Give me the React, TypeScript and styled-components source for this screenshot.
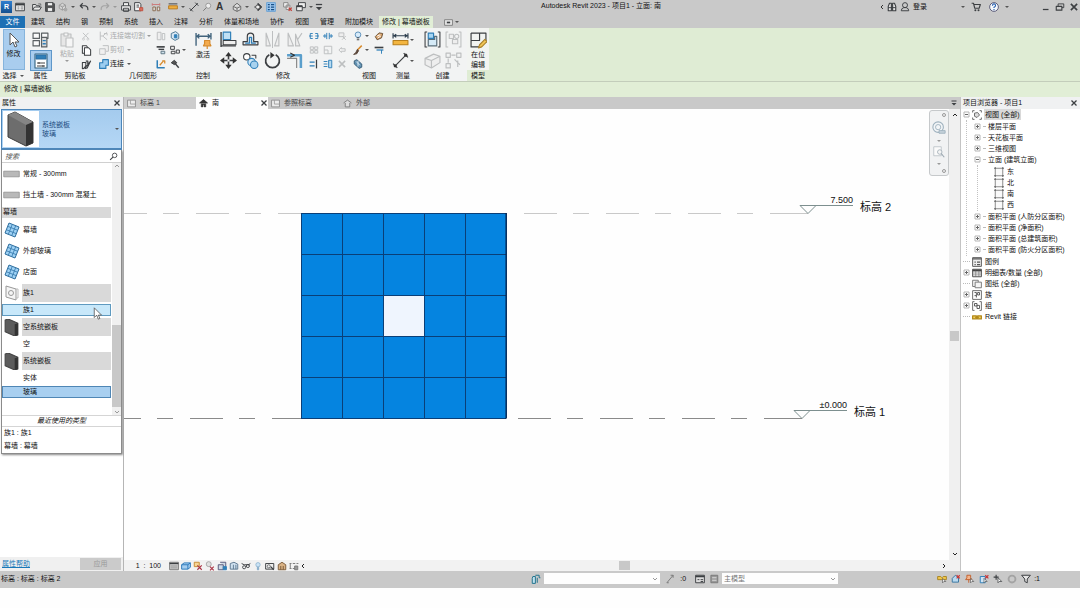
import React from "react";
import styled, { createGlobalStyle, css } from "styled-components";

const GlobalStyle = createGlobalStyle`
  *, *::before, *::after { box-sizing: border-box; }
  body { margin: 0; background: #fefefe; }
  button, input, select { font: inherit; color: inherit; margin: 0; padding: 0; border: 0; background: none; border-radius: 0; }
  ul { list-style: none; margin: 0; padding: 0; }
`;

const BLUE = "#2f7fb8";
const INK = "#3c3f42";
const PALE = "#bdbfc0";
const ORANGE = "#d68a2c";

/* ---------- icons (16 unit grid) ---------- */

type StrokeProps = { d: string; s?: string; f?: string; w?: number };
const P = ({ d, s = INK, f = "none", w = 1.5 }: StrokeProps) => (
  <path d={d} stroke={s} fill={f} strokeWidth={w} strokeLinejoin="round" />
);

const icons: Record<string, React.ReactNode> = {
  window: <><P d="M1 2h14v12H1z" f="#f4f4f4" /><P d="M1 4h14" w={3} /><P d="M4 8h3M4 11h3M9 8h4M9 11h4" w={1} /></>,
  open: <><P d="M1 13V4h5l1 2h5v2M1 13l3-5h11l-3 5z" f="#eee" /><P d="M10 3h4v3" w={1} /></>,
  save: <><P d="M1 1h12l2 2v12H1z" f="#555" /><P d="M4 1h8v5H4zM4 9h8v6H4z" f="#f2f2f2" w={1} /></>,
  cloud: <><P d="M2 5l5-3 5 3v5l-5 3-5-3zM2 5l5 3 5-3M7 8v5" s="#999" f="#d8d8d8" /><circle cx="12" cy="12" r="3" fill="#aaa" /></>,
  undo: <P d="M6 2L2 6l4 4M2 6h8q5 1 4 7" w={1.8} />,
  redo: <P d="M10 2l4 4-4 4M14 6H6q-5 1-4 7" s="#a4a4a4" w={1.8} />,
  print: <><P d="M4 6V1h8v5M1 6h14v7H1zM4 10h8v5H4z" f="#f1f1f1" /></>,
  docRed: <><P d="M1 1h8l2 3v10H1z" f="#f5f5f5" /><P d="M4 5h4M4 8h4" /><P d="M9 9h5v5H9z" f="#d87060" s="#c05040" /></>,
  measureDim: <><P d="M2 2v4M14 2v4M2 4h12" s="#c77" /><P d="M3 8h4v6H3zM10 8h4v6h-4z" s="#8a6a50" f="#ddd" /></>,
  ruler: <><P d="M1 6h14v5H1z" f="#f0ae3c" s="#b87a20" /><P d="M1 3h14" /></>,
  dim: <><P d="M2 14L14 2M1 10l5 5M10 1l5 5" w={1.6} /></>,
  tag: <><circle cx="10" cy="6" r="4" fill="#eee" stroke="#777" /><P d="M2 14l5-5" s="#777" /></>,
  home: <><P d="M2 7l6-5 6 5v5l-6 3-6-3zM2 7l6 3 6-3M8 10v5" f="#ddd" s="#666" /></>,
  section: <><P d="M2 8h3" /><circle cx="8" cy="8" r="3.5" fill="#eee" stroke="#444" strokeWidth="1.5" /><P d="M8 2l6 6-6 6z" f="#444" /><circle cx="8" cy="8" r="2.5" fill="#eee" /></>,
  thin: <><P d="M1 1h14v14H1z" s="#6aa2d4" f="#9cc6ee" /><P d="M3 4h3M8 4h5M3 8h3M8 8h5M3 12h3M8 12h5" s="#174f86" w={2} /></>,
  closeWin: <><P d="M1 1h7v7H1zM5 5h6v7H5z" f="#eee" s="#888" /><P d="M9 9l5 5M14 9l-5 5" s="#c2413a" w={2} /></>,
  switchWin: <><P d="M4 1h11v8H4z" f="#eee" /><P d="M1 6h9v8H1z" f="#eee" /><P d="M1 7h9" w={2.5} /></>,
  custom: <><P d="M3 4h10" w={2} /><P d="M3 8h10l-5 5z" f={INK} s="none" /></>,
  binoc: <><P d="M2 14V7l2-5h3v12zM9 14V2h3l2 5v7z" f="#e5e5e5" w={1.8} /><P d="M2 9h12" /></>,
  user: <><circle cx="8" cy="5" r="4" fill="none" stroke={INK} strokeWidth="1.5" /><P d="M2 14q0-4 4-5h4q4 1 4 5z" /></>,
  cart: <><P d="M1 2h3l2 8h7l2-6H5" f="none" w={1.8} /><circle cx="7" cy="13" r="1.6" fill={INK} /><circle cx="12" cy="13" r="1.6" fill={INK} /></>,
  help: <><circle cx="8" cy="8" r="7" fill="#f5f8fc" stroke="#446" strokeWidth="1.3" /><P d="M5.500 6q0-3 2.500-3t2.500 2.500q0 1.500-2.500 3v1M8 11v2" s="#2a62b0" w={1.8} /></>,
  min: <P d="M3 12h9" w={2} />,
  restore: <><P d="M5 3h9v6H5z" /><P d="M2 7h9v6H2z" f="#c9c9c9" w={1.8} /></>,
  close: <P d="M3 3l10 10M13 3L3 13" w={2.6} />,
  playBox: <><P d="M1 3h14v10H1z" f="#e8e8e8" s="#777" /><P d="M5 8h6" w={3} /></>,
  cursor: <P d="M4 1v12l3-3 2 5 2-1-2-4h4z" f="#fff" s="#555" w={1} />,
  types: <><P d="M1 2h6v5H1zM9 2h6v5H9zM1 9h6v5H1z" f="#fafafa" s="#5b6063" w={1.1} /><P d="M9 6h5v9H9z" f="#dcdcdc" s="#5b6063" w={1.1} /><P d="M10 9h3M10 12h3" s={BLUE} w={1.2} /></>,
  props: <><P d="M2 1h12v14H2z" f="#fff" s="#33627f" w={1.1} /><P d="M3 2h10v4H3z" f={BLUE} s="#2b6fa3" w={1} /><P d="M4 10h8M4 13h8M6 9v2M10 12v2" s="#444" w={1} /></>,
  paste: <><P d="M2 2h10v12H2z" f="#e7e7e7" s={PALE} w={1.1} /><P d="M5 1h4v3H5zM7 6h7v9H7z" f="#f6f6f6" s={PALE} w={1.1} /></>,
  cutGray: <><P d="M3 3l9 9M12 3l-9 9" s={PALE} /><circle cx="4" cy="13" r="1.6" fill="none" stroke={PALE} /><circle cx="11" cy="13" r="1.6" fill="none" stroke={PALE} /></>,
  copyDoc: <><P d="M2 1h6l2 3v8H2z" f="#fff" /><P d="M5 4h6l3 3v8H5z" f="#fff" /></>,
  matchBrush: <><P d="M2 5h5v5q-3 5-5 4z" f="#eee" /><P d="M7 3h3v8M14 3l-5 10-3 1 1-3z" f="#9a9a9a" /></>,
  copeGray: <><P d="M2 1v14M2 8h4l7-6M6 8l7 6M8 4h5v3" s={PALE} /></>,
  cutGeoGray: <P d="M6 1h9v9h-4M1 6h9v9H1z" f="#f0f0f0" s={PALE} />,
  join: <><P d="M6 1h9v9h-4v5H1V6h5z" f="#9ccdf0" s={BLUE} w={1.8} /></>,
  splitWall: <><P d="M2 2h6v12H2z" f="#eee" s={PALE} /><P d="M10 4h4v10h-4z" s={PALE} /></>,
  cubeBlue: <><P d="M2 4l7-3 5 4v7l-6 3-6-4z" f="#dce9f3" s="#4b7691" /><P d="M7 6h4v5H7z" f={BLUE} s={BLUE} /></>,
  beam: <><P d="M1 3h13" w={2.6} /><P d="M4 7h9" w={2.2} /><P d="M8 10h6v4H8z" s="#5f7683" f="#cfe0ea" /></>,
  boxes: <><P d="M1 2h6v5H1zM2 10h6v4H2zM10 8h5v5h-5z" f="#eee" /></>,
  paint: <><P d="M2 2v12h12" s={BLUE} w={2.4} /><P d="M6 10l6-7M10 3h4v4" s={ORANGE} w={2} /></>,
  hammer: <><P d="M2 6l5-4 4 4-4 3z" f="#555" /><P d="M8 7l6 7" w={2.4} /></>,
  activate: <><P d="M1 1v12M15 1v6M1 4h14M4 2L2 4l2 2M12 2l2 2-2 2" s="#41637c" w={1.3} /><P d="M9 8h5v3l1 2H8l1-2zM11.500 13v3" f="#f4ab4e" s={ORANGE} w={1.1} /></>,
  align: <><P d="M1 1v14M1 14h14" w={1.3} /><P d="M3 1h7v7H3z" f="#bfe0f5" s={BLUE} w={1.1} /><P d="M3 9h12v4H3z" f="#eee" w={1} /></>,
  offset: <><P d="M1 13h14v-3h-4V5q0-3-3-3T5 5v5H1z" f="#eee" w={1.1} /><P d="M3 11.500h4V6h2v5.500h4" s={BLUE} w={1.2} /></>,
  mirror1: <><P d="M2 14V2l4 12zM14 14V2l-4 12z" f="#eee" s={PALE} w={1.1} /><P d="M8 0v16" s={PALE} w={1} /></>,
  mirror2: <><P d="M2 14V2l5 12zM9 14V3l4 11zM11 8l4-6" f="#eee" s={PALE} w={1.1} /></>,
  move: <><P d="M8 3v10M3 8h10" w={1.5} /><P d="M8 0l3 4H5zM8 16l3-4H5zM0 8l4-3v6zM16 8l-4-3v6z" f="#333" s="none" /><P d="M7 7h2v2H7z" f="#f4f4f4" s="none" /></>,
  copy: <><circle cx="4.500" cy="4.500" r="3" fill="#fff" stroke={INK} /><P d="M9 3h4v3" w={1} /><circle cx="9" cy="9.500" r="3.500" fill="#cfe6f6" stroke={BLUE} /><circle cx="11.500" cy="12" r="3.500" fill="#a8d2ef" stroke={BLUE} /></>,
  rotate: <><P d="M5 2.500a6.500 6.500 0 1 0 6 0" w={1.6} /><P d="M6 0v6l4-3z" f="#333" s="none" /></>,
  trim: <><P d="M1 6h9v9" s="#888" w={1.1} /><P d="M1 3h13v12" s="#5b9fcc" w={2.4} /><P d="M4 1l4 2-4 2" s="#333" w={1} /></>,
  splitEl: <><P d="M6 4H2v8h4M10 4h4v8h-4" s={BLUE} /><P d="M0 8h6M10 8h6" s={BLUE} /></>,
  splitGap: <><P d="M6 3v10M10 3v10M0 8h6M10 8h6" s={BLUE} /><P d="M3 5v6M13 5v6" s={BLUE} /></>,
  arrGray: <><P d="M2 3h5v4H2zM9 3h5v4H9zM2 9h5v4H2zM9 9h5v4H9z" s={PALE} /></>,
  scaleGray: <><P d="M2 2h12v12H2zM2 8h6v6" s={PALE} /></>,
  unpinGray: <><P d="M3 3h8v6H3z" s={PALE} f="#eee" /><P d="M8 8l6 6M14 8l-6 6" s={PALE} /></>,
  pinGray: <P d="M3 8l4-4v2h6v4H7v2z" s={PALE} />,
  trimEl: <><P d="M1 5h8M1 11h8" s={BLUE} w={2} /><P d="M12 1v14" w={2} /></>,
  trimMul: <><P d="M1 4h6M1 8h6M1 12h6M9 2v12h5V2z" s={BLUE} f="#b7dbf2" /></>,
  xGray: <P d="M3 3l10 10M13 3L3 13" s={PALE} w={2.4} />,
  bulb: <><circle cx="8" cy="6" r="4.500" fill="#d7ebfa" stroke="#4f87b5" strokeWidth="1.4" /><P d="M6 11h4M6 14h4" /></>,
  render: <><P d="M2 9l6-6 6 1-2 7-7 3z" f="#d9a36a" s="#6b5238" /><P d="M5 8l5-2M6 11l5-3" s="#fff" /></>,
  brush: <><P d="M14 1L7 8" s={ORANGE} w={2.4} /><P d="M7 7l2 2-3 5-5 1 3-2z" f="#5a463a" s="#5a463a" /></>,
  lineWork: <><P d="M1 4h14" w={2.6} /><P d="M4 8h11" s={BLUE} w={2} /><P d="M12 8v6" s={BLUE} /></>,
  cubes: <><P d="M2 3l4-2 8 7v5l-4 2-8-7z" f="#5f8fb0" s="#3a5f7a" /><P d="M5 4l6 6M8 3v9" s="#dcecf6" /></>,
  tape: <><P d="M1 9h14v4H1z" f="#f3b53f" s="#b87f1c" w={1} /><P d="M1 2v5M15 2v5M1 4.500h14M4 3L2 4.500 4 6M12 3l2 1.500L12 6" s="#2b3c4c" w={1.100} /></>,
  dimBig: <><P d="M3 13L13 3M1 11l4 4M11 1l4 4" w={1.1} /><circle cx="3" cy="13" r="1.500" fill="#333" /><circle cx="13" cy="3" r="1.500" fill="#333" /></>,
  group: <><P d="M3 1H1v14h2M13 1h2v14h-2" w={1} /><P d="M4 2h5v5H4z" f="#a7d5f2" s={BLUE} w={1.1} /><P d="M4 8v6h8V5h-2v3z" f="#d5eaf7" s="#5a6e7a" w={1.1} /></>,
  groupGray: <><P d="M3 1H1v14h2M13 1h2v14h-2" s={PALE} w={1} /><P d="M4 3h4v4H4zM7 8h5v4H7z" s={PALE} f="#eee" w={1} /><circle cx="11" cy="5" r="2" fill="none" stroke={PALE} /></>,
  assembly: <><P d="M1 6l8-4 6 2v6l-8 5-6-3zM1 6l6 2 8-4M7 8v7" f="#eee" s={PALE} w={1.1} /></>,
  similar: <><P d="M1 1h4v4H1zM11 1h4v4h-4zM6 3h4M3 6v4M1 11h4v4H1zM9 7l5 5M12 8v6" s={PALE} w={1.1} /></>,
  editPlace: <><P d="M1 1h14v9M1 1v13h8M1 8h8V1" w={1.1} /><P d="M8 15l1-3 5-5 2 2-5 5z" f="#f0c456" s="#a9802a" w={1} /></>,
  plan: <><P d="M1 2h14v12H1z" f="#ececec" s="#888" /><P d="M6 2v7M6 9h9" s="#999" /></>,
  elevHome: <><P d="M1 7l7-6 7 6z" f="#333" s="#333" /><P d="M4 8v6h3v-4h2v4h3V8" f="#333" s="#333" w={1} /></>,
  elevHomeDim: <><P d="M1 7l7-5 7 5M4 7v7h8V7" f="#ddd" s="#777" /></>,
  search: <><circle cx="10" cy="6" r="4" fill="none" stroke={INK} strokeWidth="1.5" /><P d="M7 9l-5 5" w={1.8} /></>,
  curtain: <><P d="M5 1l10 4-4 10L1 11z" f="#9fd2f5" s="#2c6c9c" w={1} /><P d="M8.300 2.300L4.300 12.300M11.700 3.700L7.700 13.700M3.700 4.300l10 4M2.300 7.700l10 4" s="#3b7eb0" w={0.9} /></>,
  family: <><P d="M2 1l10 3v11L2 12z" f="#f5f5f5" s="#999" w={1} /><circle cx="7" cy="8" r="2.500" fill="none" stroke="#999" /><P d="M12 4h2v9h-2" s="#bbb" w={1} /></>,
  panel: <><P d="M2 1l3-1 9 4v11l-3 1-9-4z" f="#5c5c5c" s="#444" w={1} /><P d="M11 5l3-1v11l-3 1z" f="#333" s="none" /></>,
  slab: <P d="M1 4h22v8H1z" f="#b9b9b9" s="#8a8a8a" w={1} />,
  detail: <><P d="M1 2h14v12H1z" f="#c9c9c9" s="#777" /><P d="M1 4h14" w={2} /><P d="M3 8h10M3 11h10" s="#999" /></>,
  style: <><P d="M1 6l4-3h10v7l-4 3H1zM1 6h10v7M11 6l4-3" f="#a5cdee" s="#2a78ba" /></>,
  sun: <><P d="M2 2h8v7H2z" f="#f6d594" s="#c58a32" /><P d="M7 7l7 7M14 7l-7 7" s="#a34" w={1.8} /></>,
  shadow: <><circle cx="6" cy="5" r="4" fill="#e0e0e0" stroke="#888" /><P d="M8 9l6 6M14 9l-6 6" s="#a34" w={1.8} /></>,
  crop: <><P d="M2 6h8v8H2zM5 2h9v9" s="#557" f="#cdd9e5" /><P d="M10 9h5v5h-5z" f={BLUE} s={BLUE} /></>,
  cropShow: <><P d="M2 4l6-2 6 3v8H2z" f="#cfe0ee" s="#5d7890" /><P d="M7 6v7M11 6v7" s="#5d7890" /></>,
  glasses: <><P d="M1 4l4 2M15 4l-3 2M5 6h8" /><circle cx="5" cy="10" r="2.500" fill="none" stroke={INK} strokeWidth="1.4" /><circle cx="11" cy="8" r="2.500" fill="none" stroke={INK} strokeWidth="1.4" /></>,
  bulbSm: <><circle cx="8" cy="6" r="3.500" fill="#cbe3f5" stroke="#7aa3c4" /><P d="M7 10h2v4H7z" s="#7aa3c4" /></>,
  camera: <><P d="M1 4h13v9H1z" f="#eee" /><circle cx="6" cy="8.500" r="2.500" fill="none" stroke={INK} /><P d="M9 9l5 5" w={2} /></>,
  analytic: <><P d="M2 14V6l6-4 6 4v8z" f="#d8b184" s="#7a5a3a" /><P d="M6 14V8M10 14V8" s="#7a5a3a" /></>,
  constraint: <><P d="M1 4h3M6 4h4M12 4h3M1 12h3M6 12h4M2 4v8" s="#777" /><P d="M9 8h5v6H9z" f="#999" s="#777" /></>,
  workset: <><P d="M3 4h4v11H2V7z" f="#bfe0ee" s="#23758f" w={1.6} /><P d="M7 2h6v4h2M10 6v8" s="#23758f" w={1.6} /></>,
  edit: <P d="M3 14L13 2M3 14h3M9 2h4v4" s="#777" />,
  optBox: <><P d="M1 2h14v12H1z" f="#ddd" /><P d="M1 4h14" w={2.5} /><P d="M4 9h3M9 9h4M9 12h4" /></>,
  optDark: <><P d="M3 2h11v12H3z" f="#999" s="#777" /><P d="M5 6h7M5 10h7" s="#ddd" /></>,
  selLink: <><P d="M1 4h5l2 2 2-2h5v5H1z" f="#f0c64a" s="#a88424" /><P d="M9 7v7l2-2h3z" f="#fff" s="#444" w={1} /></>,
  selUnder: <><P d="M2 13V7l5-5 5 4v7z" f="#b8d9f0" s="#37749e" /><P d="M9 2l5 5M14 2L9 7" s="#c33" w={1.8} /></>,
  selPin: <><P d="M3 2h6v4l2 3H1l2-3zM6 9v5" f="#f4b48c" s="#c2602c" /><P d="M9 7v7l2-2h3z" f="#fff" s="#444" w={1} /></>,
  selFace: <><P d="M2 4h8v10H2z" f="#cfe4f5" s={BLUE} /><P d="M10 2l5 5M15 2l-5 5" s="#c33" w={1.8} /><P d="M8 7v7l2-2h3z" f="#fff" s="#444" w={1} /></>,
  drag: <><P d="M5 1v8M1 5h8" w={1.800} /><P d="M8 6v8l2-2h4z" f="#fff" w={1.2} /></>,
  ring: <circle cx="8" cy="8" r="5.500" fill="none" stroke="#a3a3a3" strokeWidth="3" />,
  filter: <P d="M1 2h14l-5 6v6l-4-2V8z" f="#e5e5e5" w={1.6} />,
  views: <><P d="M4 5l5-1 3 4-4 4-4-2z" f="#ddd" s="#666" /><P d="M1 4V1h3M12 1h3v3M15 12v3h-3M4 15H1v-3" s="#666" /></>,
  elev: <><P d="M2 2h12v12H2z" f="#fafafa" s="#8b8b8b" w={1.6} /><P d="M0 2h3M13 2h3M0 14h3M13 14h3M2 0v3M14 0v3M2 13v3M14 13v3" s="#666" w={1.4} /></>,
  legend: <><P d="M1 1h14v14H1z" f="#eee" s="#555" /><P d="M1 3h14M4 8h2M8 8h5M4 12h2M8 12h5" s="#555" w={2} /></>,
  schedule: <><P d="M1 2h14v12H1z" f="#fff" s="#444" /><P d="M1 4h14" s="#444" w={3} /><P d="M1 8h14M1 11h14M6 4v10M11 4v10" s="#666" w={1} /></>,
  sheets: <P d="M1 2h9v3h5v9H5v-2H1zM5 12V5h5" f="#f5f5f5" s="#777" />,
  familyTree: <><P d="M1 1h14v14H1z" f="#fff" s="#666" /><P d="M4 4h3v8M9 4h3v4H9zM4 9h3" s="#555" /></>,
  groupTree: <><P d="M4 1H1v14h3M12 1h3v14h-3" s="#666" /><P d="M4 4h4v4H4zM8 7h4v5H8z" s="#555" /></>,
  link: <><P d="M1 6h6v5H1zM9 6h6v5H9z" f="#f3cf58" s="#b28a1e" w={2} /><P d="M5 8.500h6" s="#b28a1e" w={2} /></>,
  wheel: <><circle cx="7" cy="7" r="6" fill="#f3f5f7" stroke="#9db0bd" strokeWidth="1.200" /><circle cx="7" cy="7" r="3" fill="none" stroke="#9db0bd" /><P d="M8 11h7v3H8z" f="#c6d3db" s="#9db0bd" w={1} /></>,
  zoomBox: <><P d="M1 1h10v12H1z" f="#fafafa" s="#b3bcc2" w={1} /><circle cx="9" cy="8" r="3" fill="#f5f5f5" stroke="#9aa7b0" /><P d="M11 10l4 5" s="#9aa7b0" /></>,
};

const Svg = styled.svg`display: block; flex: none;`;
const Icon = ({ n, size = 10 }: { n: string; size?: number }) => (
  <Svg width={size} height={size} viewBox="0 0 16 16" aria-hidden="true">{icons[n]}</Svg>
);

const Arrow = styled.span<{ $wide?: boolean; $soft?: boolean }>`
  flex: none;
  width: ${p => (p.$wide ? 8 : 6)}px;
  display: flex;
  justify-content: center;
  &::after { content: ""; border: 2px solid transparent; border-top-color: ${p => (p.$soft ? "#999" : "#555")}; border-bottom: 0; }
`;

/* ---------- frame ---------- */

const Frame = styled.div`
  min-height: 100vh;
  padding-bottom: 20px;
  display: flex;
  flex-direction: column;
  font: 7px/10px "Liberation Sans", "Noto Sans CJK SC", sans-serif;
  color: #111;
  cursor: default;
`;
const TitleBar = styled.header`
  height: 14px;
  display: flex;
  align-items: center;
  background: #c9c9c9;
`;
const ToolGroup = styled.div<{ $pad?: number }>`
  display: flex;
  align-items: center;
  padding-right: ${p => p.$pad ?? 0}px;
`;
const ToolButton = styled.button<{ $gap?: boolean; $w?: number }>`
  width: ${p => p.$w ?? 13}px;
  height: 13px;
  flex: none;
  display: flex;
  align-items: center;
  justify-content: center;
  margin-left: ${p => (p.$gap ? 4 : 0)}px;
`;
const Logo = styled.span`
  width: 11px;
  height: 12px;
  margin: 0 1px;
  background: linear-gradient(#2f7fd0, #14508f);
  color: #fff;
  font-weight: bold;
  line-height: 11px;
  text-align: center;
`;
const TextTool = styled.span`font: bold 10px/12px "Liberation Sans", sans-serif; color: #333;`;
const WindowTitle = styled.h1`flex: 1; margin: 0; padding-bottom: 2px; font: inherit; text-align: center;`;

const TabBar = styled.nav`
  height: 14px;
  display: flex;
  align-items: flex-end;
  gap: 1px;
  background: #c9c9c9;
`;
const RibbonTab = styled.button<{ $kind?: "file" | "active" }>`
  height: 12px;
  padding: 0 5px;
  line-height: 12px;
  white-space: nowrap;
  ${p => p.$kind === "file" && css`background: #1d70b4; color: #fff; width: 25px;`}
  ${p => p.$kind === "active" && css`background: #e1eed6; padding: 0 3px;`}
`;
const TabMenu = styled.button`
  display: flex;
  align-items: center;
  margin-left: 10px;
  height: 12px;
`;

const Ribbon = styled.section`
  display: flex;
  height: 54px;
  background: #dfecd4;
  border-bottom: 1px solid #c3cdbb;
`;
const Panel = styled.div<{ $w: number; $green?: boolean }>`
  width: ${p => p.$w}px;
  flex: none;
  display: flex;
  flex-direction: column;
  background: ${p => (p.$green ? "linear-gradient(#f2f4f1 80%, #dfecd4 80%)" : "#f2f3f3")};
`;
const PanelBody = styled.div`
  height: 43px;
  padding-top: 1px;
  display: flex;
  justify-content: center;
`;
const PanelLabel = styled.div`
  display: flex;
  justify-content: center;
  align-items: center;
  gap: 2px;
  white-space: nowrap;
`;
const Large = styled.button<{ $active?: boolean; $off?: boolean }>`
  width: 22px;
  height: 41px;
  display: flex;
  flex-direction: column;
  align-items: center;
  gap: 1px;
  padding-top: 3px;
  color: ${p => (p.$off ? "#a9abac" : "inherit")};
  ${p => p.$active && css`background: #a9cdee; box-shadow: inset 0 0 0 1px #86b4dc;`}
`;
const Stack = styled.div`display: flex; flex-direction: column;`;
const Half = styled.button<{ $active?: boolean }>`
  width: 22px;
  height: 21px;
  display: flex;
  align-items: center;
  justify-content: center;
  ${p => p.$active && css`background: #a9cdee; box-shadow: inset 0 0 0 1px #5f97c9;`}
`;
const Small = styled.button<{ $off?: boolean }>`
  height: 14px;
  display: flex;
  align-items: center;
  gap: 1px;
  padding: 0 1px;
  white-space: nowrap;
  color: ${p => (p.$off ? "#a9abac" : "inherit")};
`;
const Cells = styled.div<{ $cols: number; $w: number; $h: number }>`
  display: grid;
  grid-template-columns: repeat(${p => p.$cols}, ${p => p.$w}px);
  grid-auto-rows: ${p => p.$h}px;
  margin: 0 1px;
`;
const Cell = styled.button`display: flex; align-items: center; justify-content: center;`;
const IconCell = ({ n, size, arrow }: { n: string; size: number; arrow?: boolean }) => (
  <Cell type="button" aria-label={n}><Icon n={n} size={size} />{arrow && <Arrow />}</Cell>
);

const OptionsBar = styled.div`
  height: 15px;
  padding: 2px 4px 0;
  background: #e1eed6;
`;

/* ---------- workspace ---------- */

const Workspace = styled.main`
  flex: 1;
  display: grid;
  grid-template-columns: 124px minmax(0, 1fr) 120px;
`;
const Side = styled.aside<{ $right?: boolean }>`
  display: flex;
  flex-direction: column;
  background: #fff;
  border-right: ${p => (p.$right ? "0" : "1px solid #b5b5b5")};
  border-left: ${p => (p.$right ? "1px solid #c4c4c4" : "0")};
`;
const PaneHead = styled.div`
  height: 12px;
  display: flex;
  align-items: center;
  justify-content: space-between;
  padding: 0 1px 0 2px;
  background: #f0f1f2;
  white-space: nowrap;
`;
const IconButton = styled.button`
  width: 10px;
  height: 10px;
  display: flex;
  align-items: center;
  justify-content: center;
`;
const TypePicker = styled.button`
  height: 41px;
  margin: 0 1px;
  display: flex;
  align-items: center;
  gap: 3px;
  padding: 0 1px;
  text-align: left;
  color: #1c4b80;
  background: linear-gradient(#a4cbee, #b5d7f5);
  border: 1px solid #4c86ba;
  border-bottom-width: 2px;
`;
const Thumb = styled.span`
  width: 36px;
  height: 36px;
  display: flex;
  align-items: center;
  justify-content: center;
  background: #fff;
`;
const TypeText = styled.span`flex: 1; line-height: 9px;`;
const Dropdown = styled.div`
  margin: 0 1px;
  background: #fff;
  border: 1px solid #8b8b8b;
  border-top: 0;
  box-shadow: 1px 1px 2px #888;
`;
const SearchRow = styled.label`
  height: 13px;
  display: flex;
  align-items: center;
  padding: 0 3px;
  border-bottom: 1px solid #d0d0d0;
`;
const SearchInput = styled.input`
  flex: 1;
  min-width: 0;
  height: 11px;
  font-style: italic;
  outline: 0;
  &::placeholder { color: #555; opacity: 1; }
`;
const ListFrame = styled.div`
  height: 253px;
  display: flex;
  border-bottom: 1px solid #d5d5d5;
`;
const TypeList = styled.ul`flex: 1;`;
const TypeRow = styled.li`
  height: 21px;
  display: flex;
  align-items: center;
  gap: 3px;
  padding-left: 1px;
`;
const TypeSection = styled.li`
  height: 11px;
  margin: 2px 1px 1px 0;
  padding-left: 1px;
  background: #d9d9d9;
`;
const IconSlot = styled.span`width: 17px; display: flex; justify-content: center;`;
const GroupRow = styled.li`
  height: 18px;
  margin: 2px 1px 0 0;
  display: flex;
  align-items: center;
  gap: 2px;
  padding-left: 1px;
`;
const GroupName = styled.span`
  flex: 1;
  line-height: 18px;
  background: #d9d9d9;
  padding-left: 1px;
`;
const SubRow = styled.li<{ $state?: "hover" | "selected" }>`
  height: 12px;
  margin: 2px 1px 0 0;
  padding-left: 20px;
  line-height: 10px;
  border: 1px solid transparent;
  ${p => p.$state === "hover" && css`background: #c8e8fa; border-color: #5f9ac0;`}
  ${p => p.$state === "selected" && css`background: #a8cff0; border-color: #4f86b5;`}
`;
const VScroll = styled.div<{ $w: number }>`
  width: ${p => p.$w}px;
  flex: none;
  display: flex;
  flex-direction: column;
  align-items: center;
  gap: 2px;
  background: #f0f0f0;
`;
const ScrollSpace = styled.span<{ $grow: number }>`flex: ${p => p.$grow} 0 0;`;
const ScrollThumb = styled.span<{ $w: number; $h: number }>`
  width: ${p => p.$w}px;
  height: ${p => p.$h}px;
  flex: none;
  background: #c8c8c8;
`;
const Recent = styled.div`
  text-align: center;
  font-style: italic;
  border-bottom: 1px solid #d5d5d5;
`;
const RecentRow = styled.div`height: 13px; padding: 1px 2px 0;`;
const SideFoot = styled.div`
  margin-top: auto;
  height: 14px;
  display: flex;
  align-items: center;
  justify-content: space-between;
  padding: 0 2px;
  background: #f0f0f0;
`;
const HelpLink = styled.a`color: #1878b8;`;
const ApplyButton = styled.button`
  width: 41px;
  height: 12px;
  background: #cbcbcb;
  color: #9a9a9a;
`;

const Center = styled.div`
  display: flex;
  flex-direction: column;
  min-width: 0;
`;
const ViewTabs = styled.div`
  height: 12px;
  display: flex;
  background: #c9c9c9;
`;
const ViewTab = styled.button<{ $active?: boolean; $filled?: boolean }>`
  width: 72px;
  height: 12px;
  display: flex;
  align-items: center;
  gap: 4px;
  padding: 0 0 0 3px;
  color: ${p => (p.$active ? "#111" : "#444")};
  background: ${p => (p.$active ? "#fefefe" : p.$filled ? "#cdcdcd" : "none")};
`;
const TabName = styled.span`flex: 1; text-align: left;`;
const TabsMenu = styled.button`margin-left: auto; width: 13px; display: flex; align-items: center; justify-content: center;`;
const CanvasRow = styled.div`flex: 1; display: flex; min-height: 0;`;
const Canvas = styled.div`
  flex: 1;
  min-width: 0;
  position: relative;
  overflow: hidden;
  background: #fefefe;
`;
const Drawing = styled.svg`display: block; width: 100%; height: 100%;`;
const NavBar = styled.div`
  position: absolute;
  top: 1px;
  right: 0;
  width: 20px;
  height: 66px;
  display: flex;
  flex-direction: column;
  align-items: center;
  justify-content: space-between;
  padding: 2px 0;
  background: #f1f2f3;
  border: 1px solid #c6c9cb;
  border-radius: 3px;
`;
const NavDot = styled.button`
  width: 4px;
  height: 4px;
  align-self: flex-end;
  margin-right: 2px;
  border: 1px solid #999;
  border-radius: 2px;
`;
const ViewBar = styled.div`
  height: 11px;
  display: flex;
  align-items: center;
  background: #f2f2f2;
`;
const Scale = styled.button`width: 44px; text-align: right; padding-right: 7px; white-space: pre;`;
const ViewTools = styled.div`display: flex;`;
const HScroll = styled.div`flex: 1; display: flex; align-items: center; padding-right: 13px;`;

const Pointer = styled.span`
  position: absolute;
  left: 91px;
  top: 307px;
`;

/* ---------- project browser ---------- */

const Tree = styled.ul`padding: 0 0 0 2px;`;
const Branch = styled.ul<{ $deep?: boolean }>`
  padding: 1px 0 1px ${p => (p.$deep ? 16 : 7)}px;
  margin-left: 3px;
  border-left: 1px dotted #c2c2c2;
`;
const TreeRow = styled.div`
  height: 11px;
  display: flex;
  align-items: center;
  gap: 2px;
  line-height: 11px;
  white-space: nowrap;
`;
const Toggle = styled.button`
  width: 7px;
  height: 7px;
  display: flex;
  align-items: center;
  justify-content: center;
`;
const Stub = styled.span<{ $w: number }>`width: ${p => p.$w}px; border-top: 1px dotted #bbb;`;
const Label = styled.span<{ $on?: boolean }>`
  padding: 0 1px;
  background: ${p => (p.$on ? "#d9d9d9" : "none")};
`;

type NodeData = { name: string; icon?: string; open?: boolean; leaf?: boolean; on?: boolean; kids?: NodeData[] };
const tree: NodeData[] = [
  {
    name: "视图 (全部)", icon: "views", open: true, on: true, kids: [
      { name: "楼层平面" },
      { name: "天花板平面" },
      { name: "三维视图" },
      {
        name: "立面 (建筑立面)", open: true,
        kids: ["东", "北", "南", "西"].map(name => ({ name, icon: "elev", leaf: true })),
      },
      { name: "面积平面 (人防分区面积)" },
      { name: "面积平面 (净面积)" },
      { name: "面积平面 (总建筑面积)" },
      { name: "面积平面 (防火分区面积)" },
    ],
  },
  { name: "图例", icon: "legend", leaf: true },
  { name: "明细表/数量 (全部)", icon: "schedule" },
  { name: "图纸 (全部)", icon: "sheets", leaf: true },
  { name: "族", icon: "familyTree" },
  { name: "组", icon: "groupTree" },
  { name: "Revit 链接", icon: "link", leaf: true },
];
const TreeNode = ({ node, level }: { node: NodeData; level: number }) => (
  <li>
    <TreeRow>
      {level < 2 && (node.leaf ? <Stub $w={7} /> : (
        <Toggle type="button" aria-label={node.name}>
          <Svg width="7" height="7" viewBox="0 0 7 7">
            <path d="M1 1h5v5H1z" fill="#fff" stroke="#b5b5b5" strokeWidth="1" />
            <path d={node.open ? "M2 3.500h3" : "M2 3.500h3M3.500 2v3"} stroke="#666" strokeWidth="1" />
          </Svg>
        </Toggle>
      ))}
      {node.icon ? <Icon n={node.icon} /> : <Stub $w={2} />}
      <Label $on={node.on}>{node.name}</Label>
    </TreeRow>
    {node.kids && (
      <Branch $deep={level === 1}>
        {node.kids.map(k => <TreeNode key={k.name} node={k} level={level + 1} />)}
      </Branch>
    )}
  </li>
);

/* ---------- status bar ---------- */

const StatusBar = styled.footer`
  height: 17px;
  display: flex;
  align-items: center;
  padding: 0 40px 2px 1px;
  background: #c9c9c9;
`;
const StatusText = styled.span`flex: 530 0 0; white-space: nowrap;`;
const StatusField = styled.div`display: flex; align-items: center; gap: 3px;`;
const StatusSelect = styled.select`
  width: 116px;
  height: 11px;
  padding-left: 2px;
  background: #fdfdfd;
  color: #777;
  appearance: none;
`;
const SelectWrap = styled.span`
  display: flex;
  align-items: center;
  background: #fdfdfd;
  svg { margin-left: -8px; margin-right: 2px; pointer-events: none; }
`;
const StatusSpacer = styled.span`flex: 99 0 0;`;
const StatusTools = styled.div`display: flex; align-items: center; gap: 4px;`;
const Chevron = ({ d = "M1 2l2 2 2-2", c = "#666" }: { d?: string; c?: string }) => (
  <Svg width="6" height="6" viewBox="0 0 6 6"><path d={d} fill="none" stroke={c} strokeWidth="1" /></Svg>
);
const UP = "M1 4l2-2 2 2";

/* ---------- drawing ---------- */

const GRID = { x: 177, y: 104, cell: 41, n: 5 };
const lines = Array.from({ length: GRID.n + 1 }, (_, i) => i * GRID.cell);
const FONT = '"Liberation Sans", "Noto Sans CJK SC", sans-serif';

const Level = ({ x, y, start, value, name, color }: { x: number; y: number; start: number; value: string; name: string; color: string }) => (
  <g>
    <path d={`M${start} ${y + 0.5}H${x - 30}`} stroke={color} strokeDasharray="33 16 16 17" />
    <path d={`M${x - 30} ${y + 0.5}H${x}`} stroke={color} />
    <path d={`M${x + 45} ${y - 7.5}H${x - 8}l8 8 8-8`} fill="none" stroke="#7d8f8f" />
    <text x={x + 45} y={y - 10} textAnchor="end" fontSize="9" fontFamily={FONT} fill="#111">{value}</text>
    <text x={x + 52} y={y - 2} fontSize="11" fontFamily={FONT} fill="#111">{name}</text>
  </g>
);

const menuTabs = ["建筑", "结构", "钢", "预制", "系统", "插入", "注释", "分析", "体量和场地", "协作", "视图", "管理", "附加模块"];
const viewTools = ["detail", "style", "sun", "shadow", "crop", "cropShow", "glasses", "bulbSm", "camera", "analytic", "constraint"];
const modifyBig = ["align", "offset", "mirror1", "mirror2", "move", "copy", "rotate", "trim"];
const modifySmall = ["splitEl", "splitGap", "unpinGray", "arrGray", "scaleGray", "pinGray", "trimEl", "trimMul", "xGray"];
const selectTools = ["selLink", "selUnder", "selPin", "selFace", "drag", "ring"];

const Tool = ({ n, gap, w }: { n: string; gap?: boolean; w?: number }) => (
  <ToolButton type="button" aria-label={n} $gap={gap} $w={w}><Icon n={n} /></ToolButton>
);

export default function App() {
  return (
    <Frame>
      <GlobalStyle />
      <TitleBar>
        <ToolGroup>
          <Logo>R</Logo>
          <Tool n="window" /><Tool n="open" gap /><Tool n="save" /><Tool n="cloud" /><Arrow $wide />
          <Tool n="undo" /><Arrow $wide /><Tool n="redo" /><Arrow $wide $soft />
          <Tool n="print" /><Tool n="docRed" /><Tool n="measureDim" gap /><Tool n="ruler" gap /><Arrow $wide />
          <Tool n="dim" /><Tool n="tag" />
          <ToolButton type="button" aria-label="文字"><TextTool>A</TextTool></ToolButton>
          <Tool n="home" gap /><Arrow $wide /><Tool n="section" /><Tool n="thin" />
          <Tool n="closeWin" gap /><Tool n="switchWin" /><Arrow $wide /><Tool n="custom" w={8} />
        </ToolGroup>
        <WindowTitle>Autodesk Revit 2023 - 项目1 - 立面: 南</WindowTitle>
        <ToolGroup $pad={30}>
          <Chevron d="M4 1L2 3l2 2" c="#333" /><Tool n="binoc" /><Tool n="user" />
          <ToolButton type="button" $w={18}>登录</ToolButton>
        </ToolGroup>
        <ToolGroup $pad={28}>
          <Arrow $wide /><Tool n="cart" w={18} /><Tool n="help" w={18} /><Arrow $wide />
        </ToolGroup>
        <ToolGroup><Tool n="min" /><Tool n="restore" w={15} /><Tool n="close" /></ToolGroup>
      </TitleBar>

      <TabBar>
        <RibbonTab type="button" $kind="file">文件</RibbonTab>
        {menuTabs.map(t => <RibbonTab type="button" key={t}>{t}</RibbonTab>)}
        <RibbonTab type="button" $kind="active">修改 | 幕墙嵌板</RibbonTab>
        <TabMenu type="button" aria-label="显示"><Icon n="playBox" size={9} /><Arrow $wide /></TabMenu>
      </TabBar>

      <Ribbon>
        <Panel $w={27}>
          <PanelBody><Large type="button" $active><Icon n="cursor" size={16} />修改</Large></PanelBody>
          <PanelLabel>选择<Arrow /></PanelLabel>
        </Panel>
        <Panel $w={27}>
          <PanelBody>
            <Stack>
              <Half type="button" aria-label="类型属性"><Icon n="types" size={17} /></Half>
              <Half type="button" aria-label="属性" $active><Icon n="props" size={16} /></Half>
            </Stack>
          </PanelBody>
          <PanelLabel>属性</PanelLabel>
        </Panel>
        <Panel $w={42}>
          <PanelBody>
            <Large type="button" $off><Icon n="paste" size={16} />粘贴<Arrow $soft /></Large>
            <Cells $cols={1} $w={14} $h={14}>
              <IconCell n="cutGray" size={10} /><IconCell n="copyDoc" size={11} /><IconCell n="matchBrush" size={11} />
            </Cells>
          </PanelBody>
          <PanelLabel>剪贴板</PanelLabel>
        </Panel>
        <Panel $w={94}>
          <PanelBody>
            <Stack>
              <Small type="button" $off><Icon n="copeGray" />连接端切割<Arrow $soft /></Small>
              <Small type="button" $off><Icon n="cutGeoGray" />剪切<Arrow $wide $soft /></Small>
              <Small type="button"><Icon n="join" />连接<Arrow $wide /></Small>
            </Stack>
            <Cells $cols={1} $w={14} $h={14}>
              <IconCell n="splitWall" size={10} /><IconCell n="beam" size={10} /><IconCell n="paint" size={10} />
            </Cells>
            <Stack>
              <Small type="button" aria-label="墙连接"><Icon n="cubeBlue" /></Small>
              <Small type="button" aria-label="拆分面"><Icon n="boxes" /><Arrow /></Small>
              <Small type="button" aria-label="拆除"><Icon n="hammer" /></Small>
            </Stack>
          </PanelBody>
          <PanelLabel>几何图形</PanelLabel>
        </Panel>
        <Panel $w={26}>
          <PanelBody><Large type="button"><Icon n="activate" size={17} />激活</Large></PanelBody>
          <PanelLabel>控制</PanelLabel>
        </Panel>
        <Panel $w={134}>
          <PanelBody>
            <Cells $cols={4} $w={22} $h={21}>{modifyBig.map(n => <IconCell key={n} n={n} size={17} />)}</Cells>
            <Cells $cols={3} $w={14} $h={14}>{modifySmall.map(n => <IconCell key={n} n={n} size={10} />)}</Cells>
          </PanelBody>
          <PanelLabel>修改</PanelLabel>
        </Panel>
        <Panel $w={38}>
          <PanelBody>
            <Stack>
              <Small type="button" aria-label="隐藏"><Icon n="bulb" /><Arrow /></Small>
              <Small type="button" aria-label="替换"><Icon n="brush" /><Arrow /></Small>
              <Small type="button" aria-label="选择框"><Icon n="cubes" /></Small>
            </Stack>
            <Cells $cols={1} $w={14} $h={14}><IconCell n="render" size={10} /><IconCell n="lineWork" size={10} /></Cells>
          </PanelBody>
          <PanelLabel>视图</PanelLabel>
        </Panel>
        <Panel $w={30}>
          <PanelBody>
            <Cells $cols={1} $w={26} $h={21}><IconCell n="tape" size={17} arrow /><IconCell n="dimBig" size={17} arrow /></Cells>
          </PanelBody>
          <PanelLabel>测量</PanelLabel>
        </Panel>
        <Panel $w={49}>
          <PanelBody>
            <Cells $cols={2} $w={21} $h={21}>
              {["group", "groupGray", "assembly", "similar"].map(n => <IconCell key={n} n={n} size={17} />)}
            </Cells>
          </PanelBody>
          <PanelLabel>创建</PanelLabel>
        </Panel>
        <Panel $w={22} $green>
          <PanelBody><Large type="button"><Icon n="editPlace" size={17} /><span>在位<br />编辑</span></Large></PanelBody>
          <PanelLabel>模型</PanelLabel>
        </Panel>
      </Ribbon>
      <OptionsBar>修改 | 幕墙嵌板</OptionsBar>

      <Workspace>
        <Side>
          <PaneHead>属性<IconButton type="button" aria-label="关闭"><Icon n="close" size={8} /></IconButton></PaneHead>
          <TypePicker type="button">
            <Thumb>
              <Svg width="30" height="36" viewBox="0 0 30 36">
                <path d="M2 4l7-3 18 10v21l-7 3L2 26z" fill="#6d6d6d" stroke="#3d3d3d" />
                <path d="M2 4l7-3 18 10-7 3z" fill="#858585" />
                <path d="M20 14l7-3v21l-7 3z" fill="#333" />
              </Svg>
            </Thumb>
            <TypeText>系统嵌板<br />玻璃</TypeText>
            <Arrow />
          </TypePicker>
          <Dropdown>
            <SearchRow><SearchInput type="text" placeholder="搜索" aria-label="搜索" /><Icon n="search" size={9} /></SearchRow>
            <ListFrame>
              <TypeList>
                {["常规 - 300mm", "挡土墙 - 300mm 混凝土"].map(t => (
                  <TypeRow key={t}><Svg width="17" height="12" viewBox="0 0 24 16">{icons.slab}</Svg>{t}</TypeRow>
                ))}
                <TypeSection>幕墙</TypeSection>
                {["幕墙", "外部玻璃", "店面"].map(t => (
                  <TypeRow key={t}><IconSlot><Icon n="curtain" size={16} /></IconSlot>{t}</TypeRow>
                ))}
                <GroupRow><IconSlot><Icon n="family" size={16} /></IconSlot><GroupName>族1</GroupName></GroupRow>
                <SubRow $state="hover">族1</SubRow>
                <GroupRow><IconSlot><Icon n="panel" size={17} /></IconSlot><GroupName>空系统嵌板</GroupName></GroupRow>
                <SubRow>空</SubRow>
                <GroupRow><IconSlot><Icon n="panel" size={17} /></IconSlot><GroupName>系统嵌板</GroupName></GroupRow>
                <SubRow>实体</SubRow>
                <SubRow $state="selected">玻璃</SubRow>
              </TypeList>
              <VScroll $w={9}>
                <Chevron d={UP} c="#999" /><ScrollSpace $grow={1} /><ScrollThumb $w={9} $h={82} /><Chevron c="#999" />
              </VScroll>
            </ListFrame>
            <Recent>最近使用的类型</Recent>
            <RecentRow>族1 : 族1</RecentRow>
            <RecentRow>幕墙 : 幕墙</RecentRow>
          </Dropdown>
          <SideFoot><HelpLink href="#help">属性帮助</HelpLink><ApplyButton type="button" disabled>应用</ApplyButton></SideFoot>
        </Side>

        <Center>
          <ViewTabs>
            <ViewTab type="button" $filled><Icon n="plan" size={9} /><TabName>标高 1</TabName></ViewTab>
            <ViewTab type="button" $active><Icon n="elevHome" size={9} /><TabName>南</TabName><Icon n="close" size={8} /></ViewTab>
            <ViewTab type="button"><Icon n="plan" size={9} /><TabName>参照标高</TabName></ViewTab>
            <ViewTab type="button"><Icon n="elevHomeDim" size={9} /><TabName>外部</TabName></ViewTab>
            <TabsMenu type="button" aria-label="更多"><Icon n="custom" size={8} /></TabsMenu>
          </ViewTabs>
          <CanvasRow>
            <Canvas>
              <Drawing>
                <Level x={684} y={104} start={-10} value="7.500" name="标高 2" color="#c9c9c9" />
                <Level x={678} y={309} start={-16} value="±0.000" name="标高 1" color="#8a8a8a" />
                <rect x={GRID.x} y={GRID.y} width={205} height={206} fill="#0584e0" />
                <rect x={GRID.x + 82} y={GRID.y + 82} width={41} height={41} fill="#eff5fe" />
                {lines.map(o => (
                  <path key={o} d={`M${GRID.x + o + 0.5} ${GRID.y}v205M${GRID.x} ${GRID.y + o + 0.5}h205`} stroke="#0a3f78" fill="none" />
                ))}
                <path d={`M${GRID.x + 205} ${GRID.y}v206`} stroke="#06234a" strokeWidth="1" />
              </Drawing>
              <NavBar>
                <NavDot type="button" aria-label="关闭" />
                <Icon n="wheel" size={14} /><Arrow $soft /><Icon n="zoomBox" size={12} /><Arrow $soft />
                <NavDot type="button" aria-label="选项" />
              </NavBar>
            </Canvas>
            <VScroll $w={11}>
              <ScrollSpace $grow={1} /><Chevron d={UP} c="#222" /><ScrollSpace $grow={216} />
              <ScrollThumb $w={9} $h={10} />
              <ScrollSpace $grow={212} /><Chevron c="#222" /><ScrollSpace $grow={1} />
            </VScroll>
          </CanvasRow>
          <ViewBar>
            <Scale type="button">1  :  100</Scale>
            <ViewTools>{viewTools.map(n => <Tool key={n} n={n} w={12} />)}</ViewTools>
            <Chevron d="M4 1L2 3l2 2" c="#222" />
            <HScroll>
              <ScrollSpace $grow={312} /><ScrollThumb $w={11} $h={9} /><ScrollSpace $grow={311} />
              <Chevron d="M2 1l2 2-2 2" c="#222" />
            </HScroll>
          </ViewBar>
        </Center>

        <Side $right>
          <PaneHead>项目浏览器 - 项目1<IconButton type="button" aria-label="关闭"><Icon n="close" size={8} /></IconButton></PaneHead>
          <Tree>{tree.map(n => <TreeNode key={n.name} node={n} level={0} />)}</Tree>
        </Side>
      </Workspace>

      <StatusBar>
        <StatusText>标高 : 标高 : 标高 2</StatusText>
        <StatusField>
          <Icon n="workset" />
          <SelectWrap><StatusSelect aria-label="工作集"><option></option></StatusSelect><Chevron c="#999" /></SelectWrap>
          <Tool n="edit" w={14} /><span>:0</span>
          <Tool n="optBox" gap /><Icon n="optDark" />
          <SelectWrap><StatusSelect aria-label="设计选项"><option>主模型</option></StatusSelect><Chevron c="#999" /></SelectWrap>
        </StatusField>
        <StatusSpacer />
        <StatusTools>
          {selectTools.map(n => <Icon key={n} n={n} />)}
          <StatusField><Icon n="filter" />:1</StatusField>
        </StatusTools>
      </StatusBar>
      <Pointer><Icon n="cursor" size={13} /></Pointer>
    </Frame>
  );
}
